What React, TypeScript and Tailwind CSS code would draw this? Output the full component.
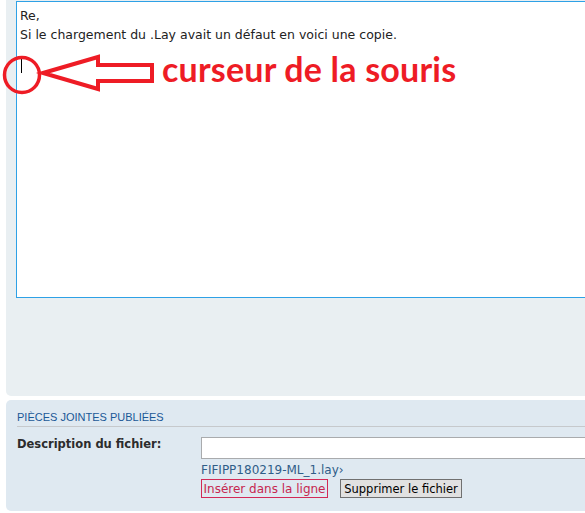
export default function App() {
  return (
    <div className="w-[585px] h-[513px] overflow-hidden bg-white font-['DejaVu_Sans',sans-serif] text-[12px] text-[#222]">
      <div className="ml-[6px] w-[620px] h-[396px] bg-[#e9eff2] rounded-bl-[5px] pl-[10px] pt-px">
        <div className="relative h-[297px] bg-white border border-[#2ea1e6] pl-[3px] pt-[4px] text-[12.5px] leading-[19px]">
          <p>Re,</p>
          <p>Si le chargement du .Lay avait un défaut en voici une copie.</p>
          <div className="mt-[12px] ml-[1px] w-px h-[17px] bg-black" />
          <svg className="absolute left-[-17px] top-[-2px]" width="160" height="100" viewBox="0 0 160 100">
            <circle cx="22" cy="75" r="17.5" fill="none" stroke="#ee1c25" strokeWidth="3.5" />
            <path d="M43 73 L98 57 L98 65 L152 65 L152 81 L98 81 L98 89 Z" fill="none" stroke="#ee1c25" strokeWidth="4" strokeLinejoin="miter" />
          </svg>
          <span className="absolute left-[145px] top-[47px] font-['Lato',sans-serif] font-bold text-[34px] leading-[40px] tracking-[0.2px] text-[#ee1c25]">
            curseur de la souris
          </span>
        </div>
      </div>
      <div className="mt-[4px] ml-[6px] w-[620px] h-[111px] bg-[#dfe9f1] rounded-l-[5px] pl-[11px] pt-[10px]">
        <div className="border-b border-[#c6c9cc] pb-[2px] font-['Liberation_Sans',sans-serif] text-[11px] leading-[14px] text-[#1a5897]">
          PIÈCES JOINTES PUBLIÉES
        </div>
        <div className="flex mt-[10px]">
          <div className="w-[184px] font-bold text-[11.5px] leading-[14px] text-[#2c2c2c]">Description du fichier:</div>
          <div className="flex flex-col">
            <div className="w-[420px] h-[22px] bg-white border border-[#a9abad]" />
            <div className="mt-[2px] text-[#2f5d88] leading-[19px]">FIFIPP180219-ML_1.lay›</div>
            <div className="flex gap-[12px] -mt-px">
              <button className="w-[127px] h-[19px] border border-[#d22a57] text-[#c6264f] leading-[16px] text-center">Insérer dans la ligne</button>
              <button className="w-[122px] h-[19px] border border-[#707070] bg-[#e1e1e1] text-black leading-[16px] text-center text-[11.5px]">Supprimer le fichier</button>
            </div>
          </div>
        </div>
      </div>
    </div>
  );
}
